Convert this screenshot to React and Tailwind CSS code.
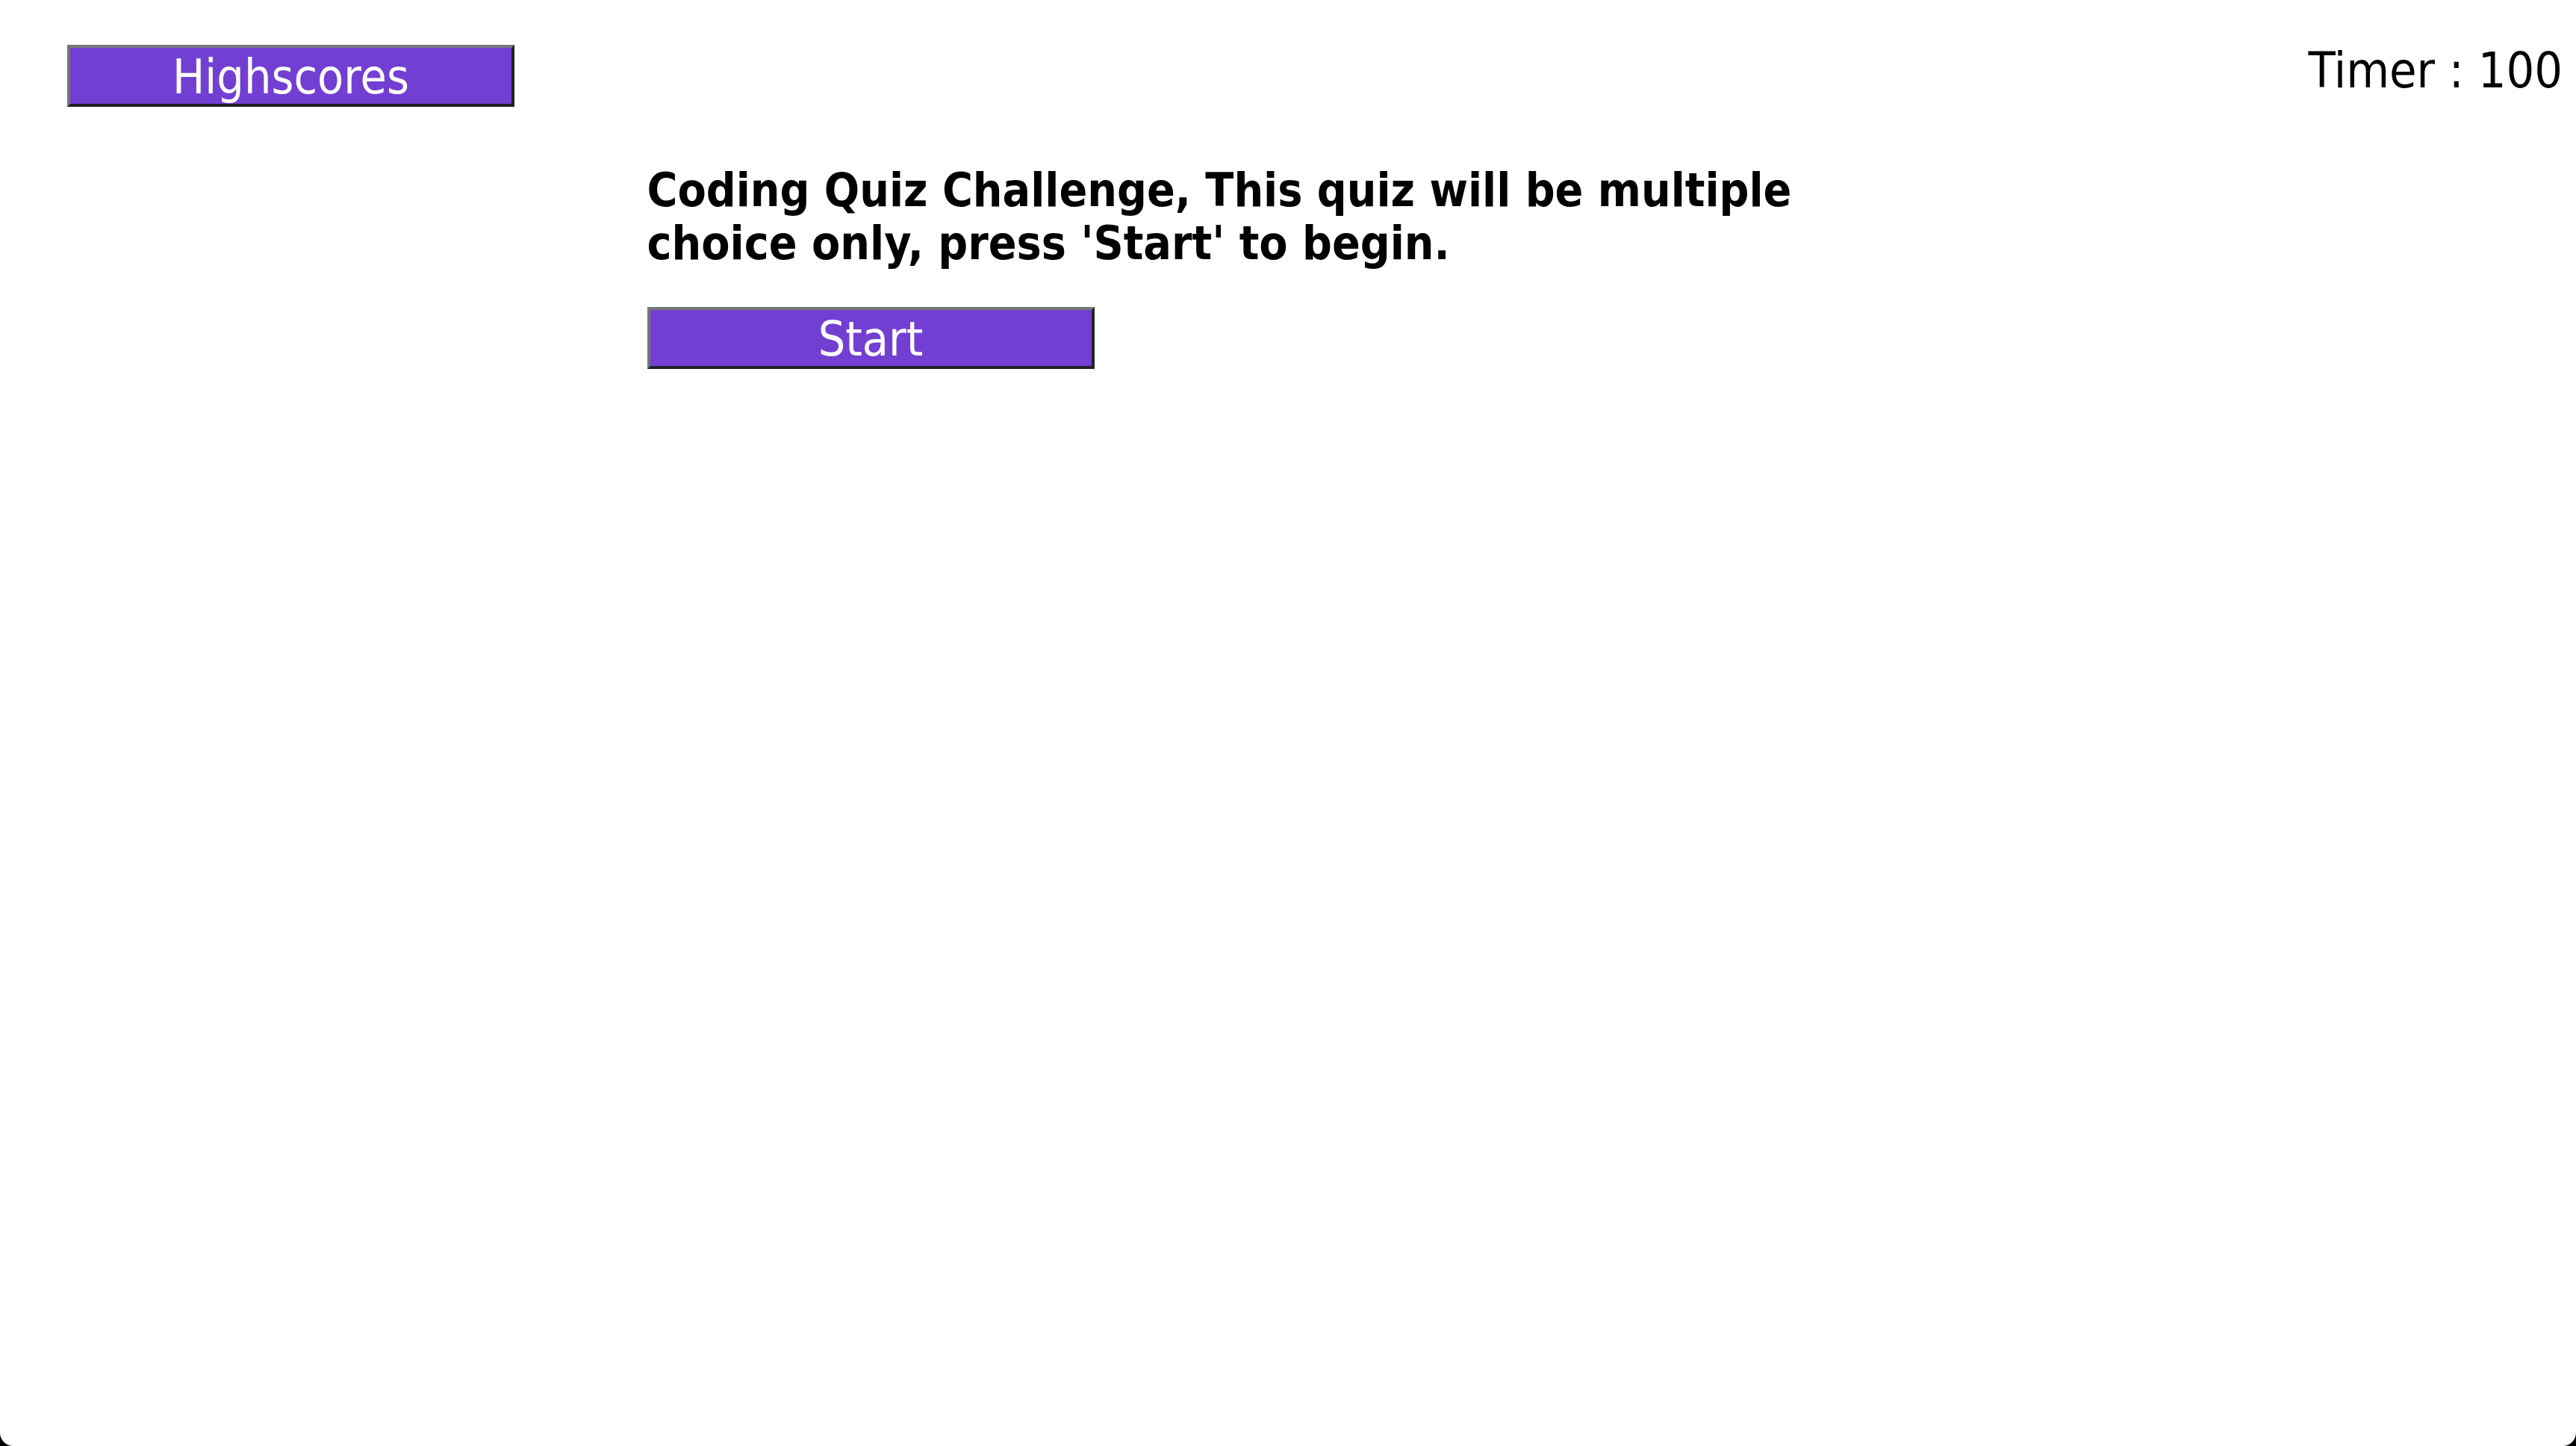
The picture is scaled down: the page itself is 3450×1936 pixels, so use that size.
import { useState } from 'react';

const font = { fontFamily: '"DejaVu Sans Condensed", "DejaVu Sans", sans-serif' };

function QuizButton({ children, onClick }) {
  return (
    <button
      type="button"
      onClick={onClick}
      className="w-[599px] h-[83px] bg-[#733fd3] text-white text-[64px] leading-none border-4 border-t-[#767676] border-l-[#767676] border-b-[#222222] border-r-[#222222] flex items-center justify-center pt-[2px]"
    >
      {children}
    </button>
  );
}

export default function App() {
  const [timer] = useState(100);

  return (
    <div className="h-[1936px] bg-black" style={font}>
      <div className="h-full bg-white rounded-b-[18px] flex flex-col">
        <header className="flex justify-between items-start pt-[60px] pl-[90px] pr-[18px]">
          <QuizButton>Highscores</QuizButton>
          <p className="text-[66px] leading-[74px] text-black -mt-[2px]">Timer : {timer}</p>
        </header>

        <main className="flex justify-center">
          <div className="w-1/2 pl-1 mt-[76px]">
            <h1 className="text-[62px] leading-[71px] font-bold text-black">
              Coding Quiz Challenge, This quiz will be multiple choice only, press 'Start' to begin.
            </h1>
            <div className="mt-[50px]">
              <QuizButton>Start</QuizButton>
            </div>
          </div>
        </main>
      </div>
    </div>
  );
}
